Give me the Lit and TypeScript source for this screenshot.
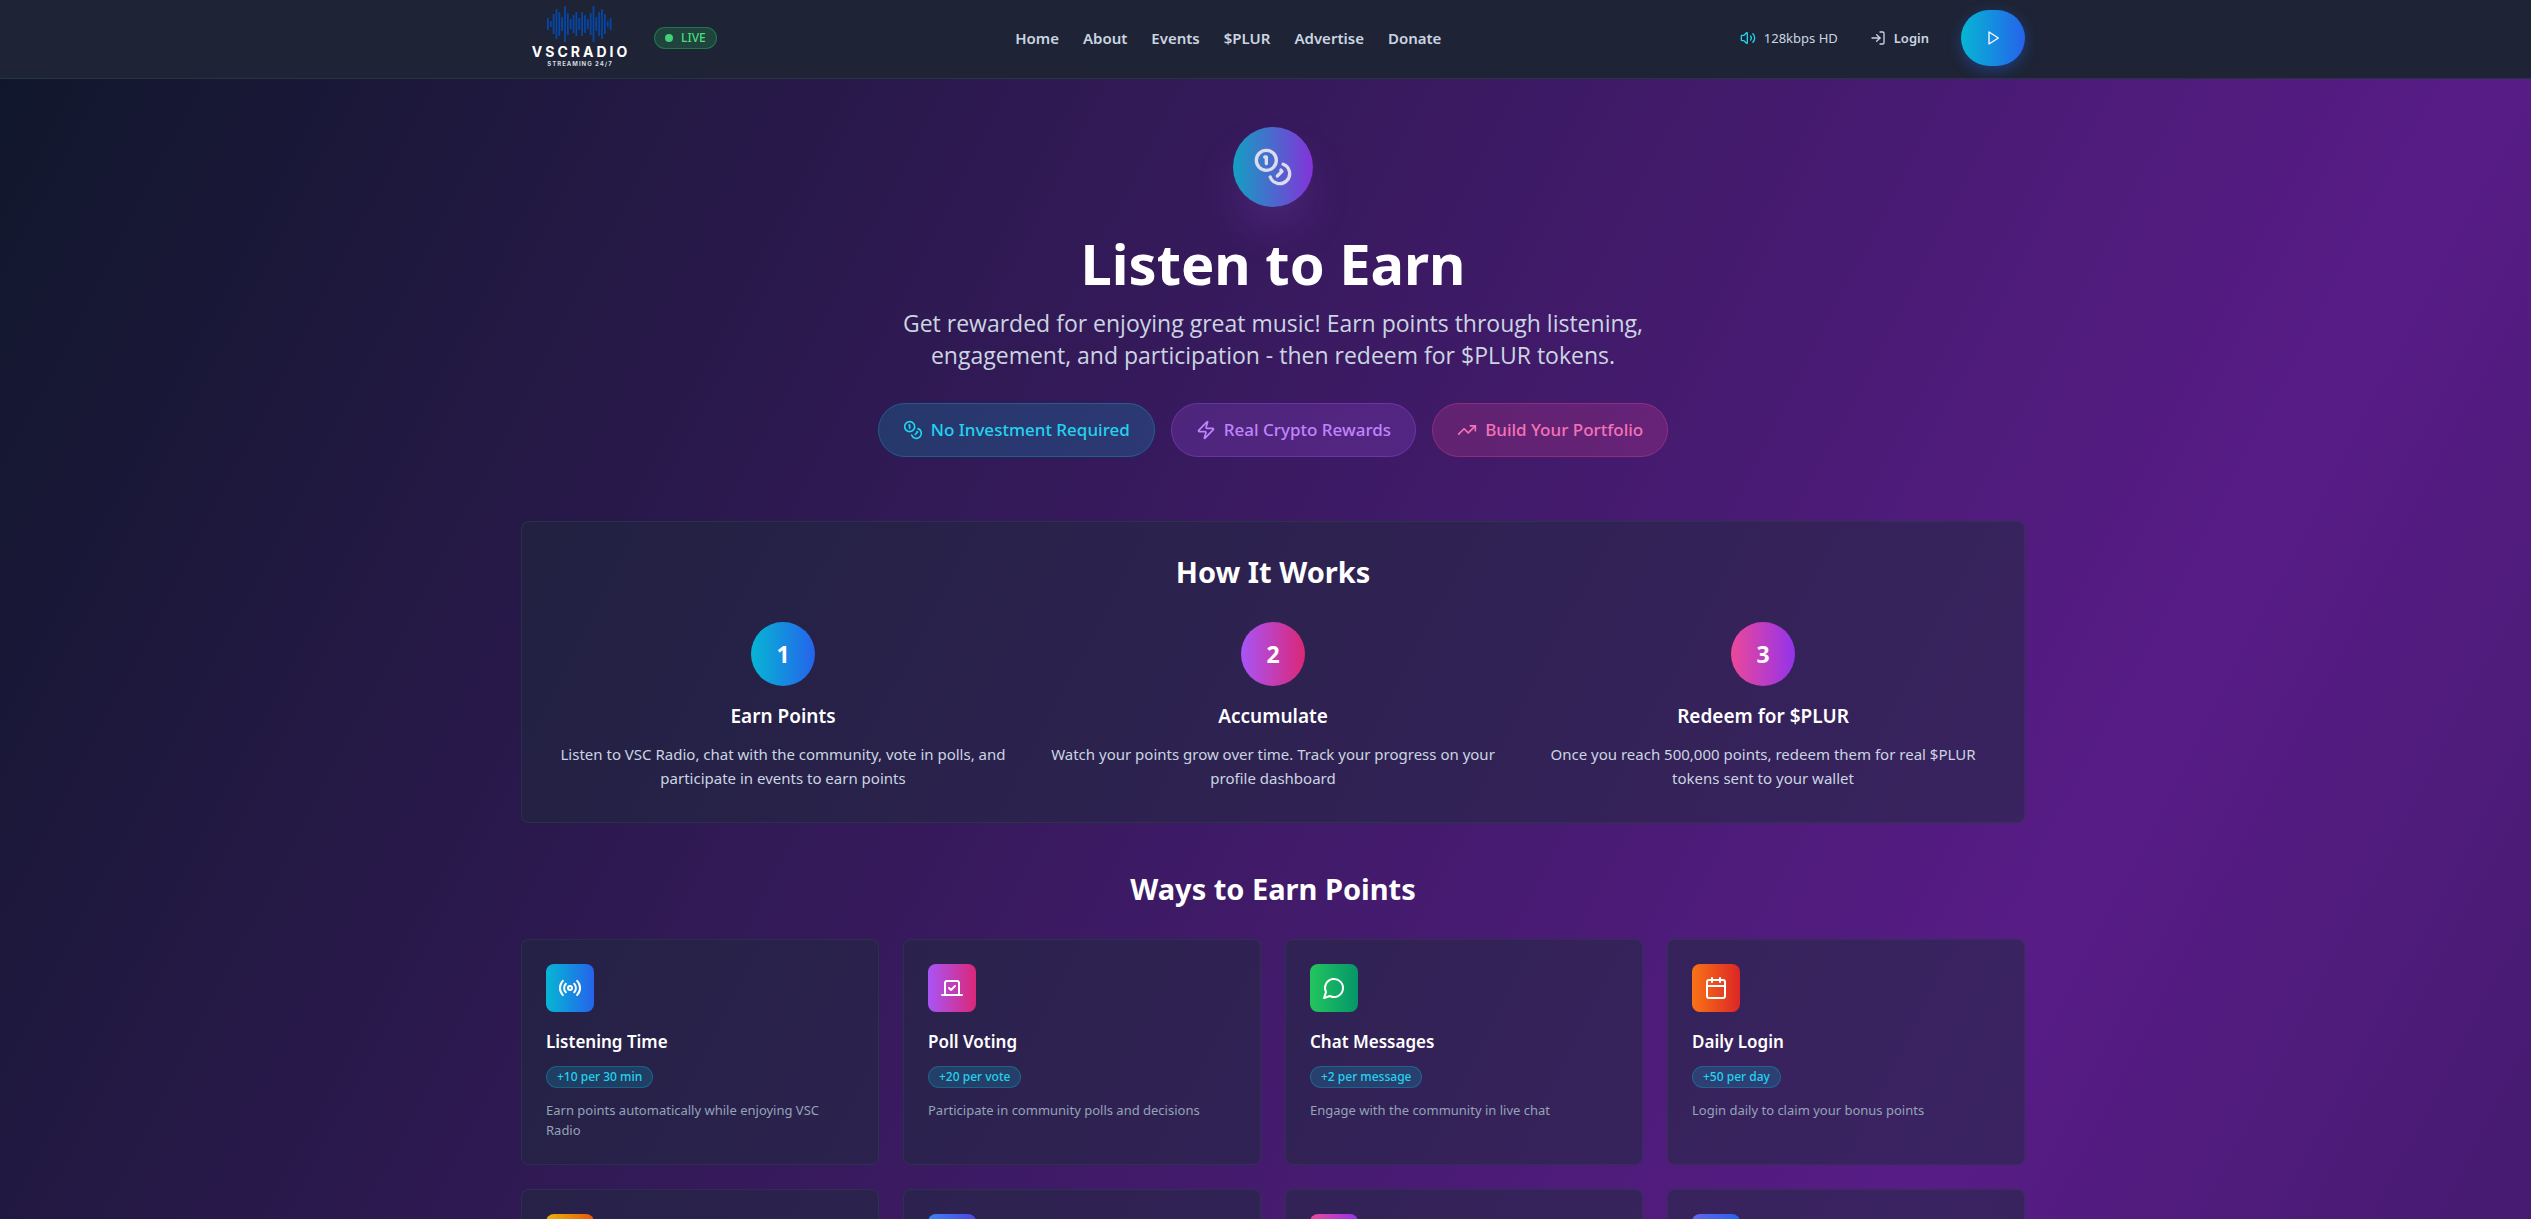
import { LitElement, html, css, svg, TemplateResult } from "lit";
import { customElement } from "lit/decorators.js";
import { classMap } from "lit/directives/class-map.js";

const icons: Record<string, TemplateResult> = {
  coins: svg`<circle cx="8" cy="8" r="6"/><path d="M18.09 10.37A6 6 0 1 1 10.34 18"/><path d="M7 6h1v4"/><path d="m16.71 13.88.7.71-2.82 2.82"/>`,
  zap: svg`<path d="M4 14a1 1 0 0 1-.78-1.63l9.9-10.2a.5.5 0 0 1 .86.46l-1.92 6.02A1 1 0 0 0 13 10h7a1 1 0 0 1 .78 1.63l-9.9 10.2a.5.5 0 0 1-.86-.46l1.92-6.02A1 1 0 0 0 11 14z"/>`,
  trend: svg`<path d="m22 7-8.5 8.5-5-5L2 17"/><path d="M16 7h6v6"/>`,
  radio: svg`<path d="M4.9 19.1C1 15.2 1 8.8 4.9 4.9"/><path d="M7.8 16.2c-2.3-2.3-2.3-6.1 0-8.5"/><circle cx="12" cy="12" r="2"/><path d="M16.2 7.8c2.3 2.3 2.3 6.1 0 8.5"/><path d="M19.1 4.9C23 8.8 23 15.1 19.1 19"/>`,
  vote: svg`<path d="m9 12 2 2 4-4"/><path d="M5 7c0-1.1.9-2 2-2h10a2 2 0 0 1 2 2v12H5V7Z"/><path d="M22 19H2"/>`,
  chat: svg`<path d="M7.9 20A9 9 0 1 0 4 16.1L2 22Z"/>`,
  calendar: svg`<path d="M8 2v4"/><path d="M16 2v4"/><rect width="18" height="18" x="3" y="4" rx="2"/><path d="M3 10h18"/>`,
  volume: svg`<path d="M11 4.702a.705.705 0 0 0-1.203-.498L6.413 7.587A1.4 1.4 0 0 1 5.416 8H3a1 1 0 0 0-1 1v6a1 1 0 0 0 1 1h2.416a1.4 1.4 0 0 1 .997.413l3.383 3.384A.705.705 0 0 0 11 19.298z"/><path d="M16 9a5 5 0 0 1 0 6"/><path d="M19.364 18.364a9 9 0 0 0 0-12.728"/>`,
  login: svg`<path d="M15 3h4a2 2 0 0 1 2 2v14a2 2 0 0 1-2 2h-4"/><path d="m10 17 5-5-5-5"/><path d="M15 12H3"/>`,
  play: svg`<path d="m6 3 14 9-14 9V3z"/>`,
};

const icon = (name: string, size: string) => html`
  <svg class="icon ${size}" viewBox="0 0 24 24" fill="none" stroke="currentColor"
    stroke-width="2" stroke-linecap="round" stroke-linejoin="round" aria-hidden="true">${icons[name]}</svg>`;

const navLinks = ["Home", "About", "Events", "$PLUR", "Advertise", "Donate"];

const perks = [
  { text: "No Investment Required", icon: "coins", tone: "cyan" },
  { text: "Real Crypto Rewards", icon: "zap", tone: "purple" },
  { text: "Build Your Portfolio", icon: "trend", tone: "pink" },
];

const steps = [
  { title: "Earn Points", text: "Listen to VSC Radio, chat with the community, vote in polls, and participate in events to earn points", tone: "cyan-blue" },
  { title: "Accumulate", text: "Watch your points grow over time. Track your progress on your profile dashboard", tone: "purple-pink" },
  { title: "Redeem for $PLUR", text: "Once you reach 500,000 points, redeem them for real $PLUR tokens sent to your wallet", tone: "pink-purple" },
];

const ways = [
  { title: "Listening Time", points: "+10 per 30 min", text: "Earn points automatically while enjoying VSC Radio", icon: "radio", tone: "cyan-blue" },
  { title: "Poll Voting", points: "+20 per vote", text: "Participate in community polls and decisions", icon: "vote", tone: "purple-pink" },
  { title: "Chat Messages", points: "+2 per message", text: "Engage with the community in live chat", icon: "chat", tone: "green" },
  { title: "Daily Login", points: "+50 per day", text: "Login daily to claim your bonus points", icon: "calendar", tone: "orange" },
];

const nextTones = ["yellow", "blue-indigo", "pink-purple", "indigo-blue"];

/* Bar tops and bottoms of the logo's waveform, left to right. */
const wave: [number, number][] = [
  [18, 30], [21, 27], [14, 34], [9, 39], [12, 36], [17, 31], [6, 42], [13, 35], [19, 29],
  [15, 33], [12, 36], [18, 30], [12, 36], [15, 33], [19, 29], [13, 35], [6, 42], [17, 31],
  [12, 36], [9, 39], [14, 34], [21, 27], [18, 30],
];

@customElement("app-root")
export class AppRoot extends LitElement {
  static styles = css`
    :host {
      display: block;
      height: 100vh;
      overflow: hidden;
      color: #fff;
      font-family: "Noto Sans", "Open Sans", sans-serif;
      font-size: 16px;
      line-height: 24px;
    }
    * { box-sizing: border-box; margin: 0; }
    a { color: inherit; text-decoration: none; }
    .icon { display: block; flex: none; }
    .s16 { width: 16px; height: 16px; }
    .s20 { width: 20px; height: 20px; }
    .s24 { width: 24px; height: 24px; }
    .s40 { width: 40px; height: 40px; }

    .page {
      background: linear-gradient(to bottom right, #0f172a, #581c87, #0f172a) no-repeat;
      background-size: 100% 4900px;
    }
    .container {
      width: 100%;
      max-width: 1536px;
      margin: 0 auto;
      padding: 0 16px;
    }
    header {
      padding: 0 0 2px 15px;
      background: #1e2435;
      border-bottom: 1px solid #26363f;
    }
    .bar {
      display: flex;
      align-items: center;
      justify-content: space-between;
      height: 76px;
    }
    .brand, .tools { display: flex; align-items: center; }
    .brand { gap: 16px; }
    .logo { display: block; width: 117px; height: 76px; }
    .logo-name { font: 700 14px "Inter", sans-serif; fill: #fff; letter-spacing: 3px; }
    .logo-tag { font: 700 6px "Inter", sans-serif; fill: #d5d8e0; letter-spacing: 1px; }
    .live {
      display: flex;
      align-items: center;
      gap: 8px;
      height: 22px;
      padding: 0 10px;
      border: 1px solid rgba(34, 197, 94, 0.4);
      border-radius: 11px;
      background: rgba(34, 197, 94, 0.2);
      color: #4ade80;
      font-size: 12px;
      font-weight: 500;
      line-height: 16px;
    }
    .dot { width: 8px; height: 8px; border-radius: 50%; background: #45cf78; }
    nav { display: flex; gap: 24px; color: #cbd5e1; font-size: 15px; font-weight: 600; }
    .tools { gap: 32px; color: #cbd5e1; font-size: 13px; }
    .quality, .login { display: flex; align-items: center; gap: 8px; }
    .login { font-weight: 600; }
    .quality .icon { color: #22d3ee; }
    .play {
      display: grid;
      place-items: center;
      width: 64px;
      height: 56px;
      padding: 0;
      border: 0;
      border-radius: 28px;
      background: linear-gradient(to right, #06b6d4, #2563eb);
      box-shadow: 0 4px 14px rgba(37, 99, 235, 0.4);
      color: #fff;
    }

    main { padding: 48px 0 0 15px; }
    .hero {
      display: flex;
      flex-direction: column;
      align-items: center;
      text-align: center;
    }
    .badge {
      display: grid;
      place-items: center;
      width: 80px;
      height: 80px;
      border-radius: 50%;
      background: linear-gradient(to right, #139fc2, #8432d9);
      box-shadow: 0 25px 50px -12px rgba(168, 85, 247, 0.3);
      color: #dcdcec;
    }
    h1 { margin-top: 24px; font-size: 56px; line-height: 64px; font-weight: 700; }
    .lead {
      max-width: 768px;
      margin-top: 12px;
      color: #cbd5e1;
      font-family: "Open Sans", "Noto Sans", sans-serif;
      font-size: 23px;
      line-height: 32px;
    }
    .perks { display: flex; gap: 16px; margin-top: 32px; padding: 0; list-style: none; }
    .perk {
      display: flex;
      align-items: center;
      gap: 8px;
      height: 54px;
      padding: 0 24px;
      border: 1px solid;
      border-radius: 27px;
      font-size: 17px;
      font-weight: 500;
    }
    .perk.cyan { color: #22d3ee; background: rgba(6, 182, 212, 0.2); border-color: rgba(6, 182, 212, 0.3); }
    .perk.purple { color: #c084fc; background: rgba(168, 85, 247, 0.2); border-color: rgba(168, 85, 247, 0.3); }
    .perk.pink { color: #f472b6; background: rgba(236, 72, 153, 0.2); border-color: rgba(236, 72, 153, 0.3); }

    .panel, .card {
      border: 1px solid rgba(45, 65, 75, 0.5);
      border-radius: 8px;
      background: rgba(30, 41, 59, 0.5);
    }
    .panel { margin-top: 64px; padding: 32px; text-align: center; }
    h2 { text-align: center; font-size: 29px; line-height: 36px; font-weight: 700; }
    .steps {
      display: grid;
      grid-template-columns: repeat(3, 1fr);
      gap: 32px;
      margin: 32px 0 0;
      padding: 0;
      list-style: none;
    }
    .step { display: flex; flex-direction: column; align-items: center; }
    .num {
      display: grid;
      place-items: center;
      width: 64px;
      height: 64px;
      border-radius: 50%;
      font-size: 23px;
      font-weight: 700;
    }
    .step h3 { margin-top: 16px; font-size: 19px; line-height: 28px; font-weight: 600; }
    .step p { margin-top: 12px; color: #cbd5e1; font-size: 15px; }
    .ways { margin-top: 48px; }
    .grid { display: grid; grid-template-columns: repeat(4, 1fr); gap: 24px; margin-top: 32px; }
    .card { padding: 24px; }
    .tile {
      display: grid;
      place-items: center;
      width: 48px;
      height: 48px;
      border-radius: 8px;
    }
    .card h3 { margin-top: 16px; font-size: 17px; line-height: 28px; font-weight: 600; }
    .points {
      display: block;
      width: fit-content;
      margin-top: 10px;
      padding: 2px 10px;
      border: 1px solid rgba(6, 182, 212, 0.3);
      border-radius: 11px;
      background: rgba(6, 182, 212, 0.2);
      color: #22d3ee;
      font-size: 12px;
      line-height: 16px;
      font-weight: 500;
    }
    .card p { margin-top: 12px; color: #94a3b8; font-size: 13px; line-height: 20px; }
    .cyan-blue { background: linear-gradient(to right, #06b6d4, #2563eb); }
    .purple-pink { background: linear-gradient(to right, #a855f7, #db2777); }
    .pink-purple { background: linear-gradient(to right, #ec4899, #9333ea); }
    .green { background: linear-gradient(to right, #22c55e, #059669); }
    .orange { background: linear-gradient(to right, #f97316, #dc2626); }
    .yellow { background: linear-gradient(to right, #eab308, #ea580c); }
    .blue-indigo { background: linear-gradient(to right, #3b82f6, #4f46e5); }
    .indigo-blue { background: linear-gradient(to right, #6366f1, #2563eb); }
  `;

  private logo() {
    return html`
      <svg class="logo" viewBox="0 0 117 76" role="img" aria-label="VSC Radio">
        <g fill="#0646a5">
          ${wave.map(([top, bottom], i) => svg`<rect x=${26 + i * 2.85} y=${top} width="1.8" height=${bottom - top} rx="0.6"/>`)}
        </g>
        <text class="logo-name" x="60" y="57" text-anchor="middle">VSCRADIO</text>
        <text class="logo-tag" x="59" y="66" text-anchor="middle">STREAMING 24/7</text>
      </svg>`;
  }

  render() {
    return html`
      <div class="page">
        <header>
          <div class="container bar">
            <div class="brand">
              <a href="#">${this.logo()}</a>
              <span class="live"><span class="dot"></span>LIVE</span>
            </div>
            <nav>${navLinks.map((l) => html`<a href="#">${l}</a>`)}</nav>
            <div class="tools">
              <span class="quality">${icon("volume", "s16")}128kbps HD</span>
              <a class="login" href="#">${icon("login", "s16")}Login</a>
              <button class="play" aria-label="Play">${icon("play", "s16")}</button>
            </div>
          </div>
        </header>
        <main>
          <div class="container">
            <section class="hero">
              <div class="badge">${icon("coins", "s40")}</div>
              <h1>Listen to Earn</h1>
              <p class="lead">Get rewarded for enjoying great music! Earn points through listening, engagement, and participation - then redeem for $PLUR tokens.</p>
              <ul class="perks">
                ${perks.map((p) => html`<li class="perk ${p.tone}">${icon(p.icon, "s20")}${p.text}</li>`)}
              </ul>
            </section>
            <section class="panel">
              <h2>How It Works</h2>
              <ol class="steps">
                ${steps.map((s, i) => html`
                  <li class="step">
                    <span class=${classMap({ num: true, [s.tone]: true })}>${i + 1}</span>
                    <h3>${s.title}</h3>
                    <p>${s.text}</p>
                  </li>`)}
              </ol>
            </section>
            <section class="ways">
              <h2>Ways to Earn Points</h2>
              <div class="grid">
                ${ways.map((w) => html`
                  <article class="card">
                    <div class=${classMap({ tile: true, [w.tone]: true })}>${icon(w.icon, "s24")}</div>
                    <h3>${w.title}</h3>
                    <span class="points">${w.points}</span>
                    <p>${w.text}</p>
                  </article>`)}
                ${nextTones.map((t) => html`
                  <article class="card"><div class=${classMap({ tile: true, [t]: true })}></div></article>`)}
              </div>
            </section>
          </div>
        </main>
      </div>`;
  }
}
